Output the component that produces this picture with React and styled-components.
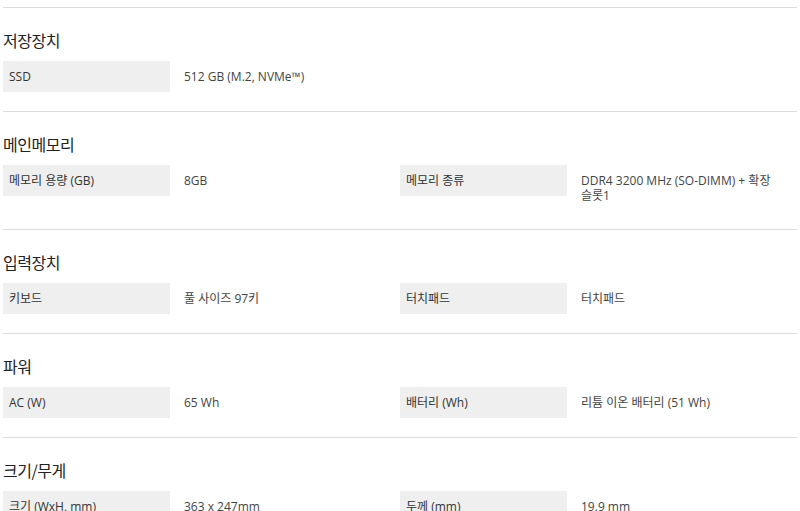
import React from "react";
import styled, { createGlobalStyle } from "styled-components";

const GlobalStyle = createGlobalStyle`
  html, body {
    margin: 0;
    padding: 0;
    background: #fff;
  }
  body {
    font-family: "Open Sans", "Noto Sans CJK KR", sans-serif;
    color: #333;
  }
`;

const specs = [
  {
    title: "저장장치",
    items: [{ label: "SSD", value: "512 GB (M.2, NVMe™)" }],
  },
  {
    title: "메인메모리",
    items: [
      { label: "메모리 용량 (GB)", value: "8GB" },
      { label: "메모리 종류", value: "DDR4 3200 MHz (SO-DIMM) + 확장 슬롯1" },
    ],
  },
  {
    title: "입력장치",
    items: [
      { label: "키보드", value: "풀 사이즈 97키" },
      { label: "터치패드", value: "터치패드" },
    ],
  },
  {
    title: "파워",
    items: [
      { label: "AC (W)", value: "65 Wh" },
      { label: "배터리 (Wh)", value: "리튬 이온 배터리 (51 Wh)" },
    ],
  },
  {
    title: "크기/무게",
    items: [
      { label: "크기 (WxH, mm)", value: "363 x 247mm" },
      { label: "두께 (mm)", value: "19.9 mm" },
      { label: "무게 (kg)", value: "1.48 kg" },
    ],
  },
];

const Page = styled.div`
  padding: 7px 3px 0;
`;

const Section = styled.section`
  border-top: 1px solid #dcdcdc;
  padding: 22px 0 19px;
`;

const Title = styled.h3`
  margin: 0 0 11px;
  font-family: "Noto Sans CJK KR", sans-serif;
  font-size: 16px;
  line-height: 20px;
  font-weight: 400;
  color: #222;
  letter-spacing: -0.5px;
`;

const Grid = styled.div`
  display: grid;
  grid-template-columns: 397px 397px;
  row-gap: 12px;
`;

const Item = styled.div`
  display: grid;
  grid-template-columns: 167px 1fr;
  align-items: start;
`;

const Label = styled.div`
  background: #efefef;
  padding: 8px 6px;
  font-size: 12px;
  line-height: 15px;
  color: #333;
`;

const Value = styled.div`
  padding: 8px 16px 7px 14px;
  font-size: 12px;
  line-height: 15px;
  color: #444;
  word-break: keep-all;
`;

export default function App() {
  return (
    <Page>
      <GlobalStyle />
      {specs.map((s) => (
        <Section key={s.title}>
          <Title>{s.title}</Title>
          <Grid>
            {s.items.map((it) => (
              <Item key={it.label}>
                <Label>{it.label}</Label>
                <Value>{it.value}</Value>
              </Item>
            ))}
          </Grid>
        </Section>
      ))}
    </Page>
  );
}
